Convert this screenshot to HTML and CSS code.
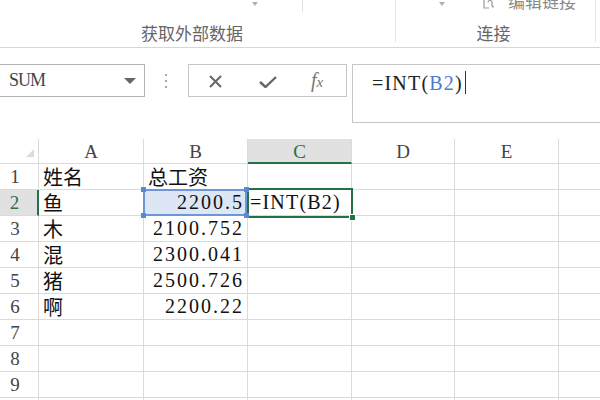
FILE: index.html
```html
<!DOCTYPE html>
<html lang="zh-CN">
<head>
<meta charset="utf-8">
<title>INT</title>
<link rel="stylesheet" href="styles.css">
</head>
<body>
<div class="ribbon">
  <div class="group g1">
    <div class="gtop"><span class="caret"></span><span class="tick"></span></div>
    <div class="glabel">获取外部数据</div>
  </div>
  <div class="group g2">
    <div class="gtop">
      <span class="caret"></span>
      <span class="editlink">
        <svg class="linkicon" width="12" height="12" viewBox="0 0 12 12"><path d="M1 0 V11 H6" fill="none" stroke="#9a9a9a" stroke-width="1.2"/><path d="M5 5.5 a2 2 0 0 1 4 0 v2.5 a2 2 0 0 0 2 2" fill="none" stroke="#9a9a9a" stroke-width="1.2"/></svg>
        <span class="eltext">编辑链接</span>
      </span>
    </div>
    <div class="glabel">连接</div>
  </div>
  <div class="group g3"></div>
</div>

<div class="fbar">
  <div class="namebox"><span>SUM</span><span class="nb-caret"></span></div>
  <div class="dots"><i></i><i></i><i></i></div>
  <div class="fbtns">
    <svg class="ico-x" width="13" height="13" viewBox="0 0 13 13"><path d="M1 1 L12 12 M12 1 L1 12" stroke="#666" stroke-width="2" fill="none"/></svg>
    <svg class="ico-ok" width="18" height="12" viewBox="0 0 18 12"><path d="M1 6 L6.5 11 L17 1" stroke="#666" stroke-width="2.4" fill="none"/></svg>
    <span class="fx">f<span class="fxx">x</span></span>
  </div>
  <div class="finput"><span>=INT(<span class="refc">B2</span>)</span><span class="cursor"></span></div>
</div>

<div class="sheet">
  <div class="corner"><svg width="8" height="8" viewBox="0 0 8 8"><path d="M8 0 V8 H0 Z" fill="#dcdcdc"/></svg></div>
  <div class="ch">A</div>
  <div class="ch">B</div>
  <div class="ch sel">C</div>
  <div class="ch">D</div>
  <div class="ch">E</div>
  <div class="ch"></div>

  <div class="rh">1</div>
  <div class="c"><span class="zh">姓名</span></div>
  <div class="c"><span class="zh">总工资</span></div>
  <div class="c"></div><div class="c"></div><div class="c"></div><div class="c"></div>

  <div class="rh sel">2</div>
  <div class="c"><span class="zh">鱼</span></div>
  <div class="c num refcell">2200.5<span class="refbox"><i class="h tl"></i><i class="h tr"></i><i class="h bl"></i><i class="h br"></i></span></div>
  <div class="c active">=INT(B2)<span class="actbox"><i class="fill"></i></span></div>
  <div class="c"></div><div class="c"></div><div class="c"></div>

  <div class="rh">3</div>
  <div class="c"><span class="zh">木</span></div>
  <div class="c num">2100.752</div>
  <div class="c"></div><div class="c"></div><div class="c"></div><div class="c"></div>

  <div class="rh">4</div>
  <div class="c"><span class="zh">混</span></div>
  <div class="c num">2300.041</div>
  <div class="c"></div><div class="c"></div><div class="c"></div><div class="c"></div>

  <div class="rh">5</div>
  <div class="c"><span class="zh">猪</span></div>
  <div class="c num">2500.726</div>
  <div class="c"></div><div class="c"></div><div class="c"></div><div class="c"></div>

  <div class="rh">6</div>
  <div class="c"><span class="zh">啊</span></div>
  <div class="c num">2200.22</div>
  <div class="c"></div><div class="c"></div><div class="c"></div><div class="c"></div>

  <div class="rh">7</div>
  <div class="c"></div><div class="c"></div><div class="c"></div><div class="c"></div><div class="c"></div><div class="c"></div>

  <div class="rh">8</div>
  <div class="c"></div><div class="c"></div><div class="c"></div><div class="c"></div><div class="c"></div><div class="c"></div>

  <div class="rh">9</div>
  <div class="c"></div><div class="c"></div><div class="c"></div><div class="c"></div><div class="c"></div><div class="c"></div>

  <div class="rh"></div>
  <div class="c"></div><div class="c"></div><div class="c"></div><div class="c"></div><div class="c"></div><div class="c"></div>
</div>
</body>
</html>
```

FILE: styles.css
```css
html, body {
  margin: 0;
  padding: 0;
  background: #fff;
}
body {
  width: 600px;
  height: 400px;
  overflow: hidden;
  font-family: "Liberation Serif", "Noto Sans CJK SC", serif;
  color: #222;
}

/* ribbon */
.ribbon {
  height: 47px;
  border-bottom: 1px solid #d6d6d6;
  display: flex;
  align-items: flex-start;
  overflow: hidden;
}
.group {
  box-sizing: border-box;
  height: 42px;
  border-right: 1px solid #e2e2e2;
  display: flex;
  flex-direction: column;
  justify-content: space-between;
  flex: none;
}
.g1 { width: 396px; padding-right: 11px; }
.g2 { width: 200px; padding-right: 4px; }
.g3 { width: 20px; border-right: none; }
.gtop {
  height: 20px;
  display: flex;
  align-items: flex-start;
}
.g1 .gtop { padding-left: 252px; }
.g2 .gtop { padding-left: 43px; }
.caret {
  width: 0;
  height: 0;
  margin-top: 2px;
  border-left: 3px solid transparent;
  border-right: 3px solid transparent;
  border-top: 4px solid #b0b0b0;
}
.tick {
  width: 1px;
  height: 12px;
  margin-left: 44px;
  background: #e2e2e2;
}
.editlink {
  display: flex;
  align-items: flex-start;
  margin-left: 38px;
  margin-top: -8px;
}
.linkicon { margin-top: 5px; }
.eltext {
  margin-left: 13px;
  font-family: "Noto Sans CJK SC", sans-serif;
  font-size: 17px;
  line-height: 17px;
  color: #8a8a8a;
}
.glabel {
  font-family: "Noto Sans CJK SC", sans-serif;
  font-size: 17px;
  line-height: 18px;
  color: #666;
  text-align: center;
}

/* formula bar */
.fbar {
  box-sizing: border-box;
  height: 91px;
  padding-top: 16px;
  display: flex;
  align-items: flex-start;
}
.namebox {
  box-sizing: border-box;
  flex: none;
  width: 146px;
  height: 33px;
  margin-left: -1px;
  border: 1px solid #b4b4b4;
  padding: 0 8px 0 9px;
  display: flex;
  align-items: center;
  justify-content: space-between;
  font-size: 18px;
  letter-spacing: -1px;
  color: #444;
}
.nb-caret {
  width: 0;
  height: 0;
  border-left: 6px solid transparent;
  border-right: 6px solid transparent;
  border-top: 6px solid #666;
}
.dots {
  flex: none;
  width: 3px;
  height: 33px;
  margin-left: 20px;
  display: flex;
  flex-direction: column;
  justify-content: center;
  gap: 4px;
}
.dots i {
  display: block;
  width: 2px;
  height: 2px;
  background: #a8a8a8;
}
.fbtns {
  box-sizing: border-box;
  flex: none;
  width: 159px;
  height: 33px;
  margin-left: 20px;
  border: 1px solid #c6c6c6;
  display: flex;
  align-items: center;
  padding-left: 20px;
}
.ico-x { margin-top: 1px; }
.ico-ok { margin-left: 37px; margin-top: 2px; }
.fx {
  margin-left: 34px;
  font-family: "Liberation Serif", serif;
  font-style: italic;
  font-size: 20px;
  color: #777;
  line-height: 20px;
}
.fxx { font-size: 15px; }
.finput {
  box-sizing: border-box;
  flex: none;
  width: 252px;
  height: 59px;
  margin-left: 5px;
  border: 1px solid #c6c6c6;
  padding: 5px 0 0 19px;
  font-size: 20px;
  letter-spacing: 1.2px;
  line-height: 26px;
  color: #222;
  display: flex;
  align-items: flex-start;
}
.refc { color: #4e7ad3; }
.cursor {
  width: 1px;
  height: 23px;
  margin-left: 2px;
  margin-top: 1px;
  background: #333;
}

/* sheet */
.sheet {
  display: grid;
  grid-template-columns: 39px 105px 104px 104px 103px 104px 60px;
  grid-template-rows: 25px repeat(10, 26px);
}
.sheet > div {
  box-sizing: border-box;
  border-right: 1px solid #dadada;
  border-bottom: 1px solid #dadada;
  white-space: nowrap;
}
.corner {
  display: flex;
  justify-content: flex-end;
  align-items: flex-end;
  padding: 0 4px 6px 0;
}
.ch {
  text-align: center;
  font-size: 19px;
  line-height: 26px;
  color: #444;
}
.ch.sel {
  background: #e1e1e1;
  color: #217346;
  border-bottom: 2px solid #217346 !important;
  line-height: 25px;
}
.rh {
  text-align: center;
  padding-right: 8px;
  font-size: 19px;
  line-height: 26px;
  color: #444;
}
.rh.sel {
  background: #e1e1e1;
  color: #2f6f4f;
  border-right: 2px solid #217346 !important;
}
.c {
  position: relative;
  padding: 0 4px;
  font-size: 20px;
  letter-spacing: 1.2px;
  line-height: 25px;
  color: #111;
}
.zh {
  font-family: "Noto Sans CJK SC", sans-serif;
  font-size: 20px;
  letter-spacing: 0;
}
.num { text-align: right; padding-right: 3px; letter-spacing: 2px; }
.refcell { background: #dce6f5; }
.refbox {
  position: absolute;
  left: -1px;
  top: -1px;
  right: 0;
  bottom: -1px;
  border: 2px solid #6d95da;
  z-index: 3;
}
.h {
  position: absolute;
  width: 5px;
  height: 5px;
  background: #5b88d6;
}
.h.tl { left: -4px; top: -4px; }
.h.tr { right: -4px; top: -4px; }
.h.bl { left: -4px; bottom: -4px; }
.h.br { right: -4px; bottom: -4px; }
.active { padding-left: 2px; }
.actbox {
  position: absolute;
  left: -1px;
  top: -2px;
  right: -2px;
  bottom: -3px;
  border: 2px solid #217346;
  z-index: 2;
}
.fill {
  position: absolute;
  right: -5px;
  bottom: -5px;
  width: 5px;
  height: 5px;
  background: #217346;
  border: 1px solid #fff;
}
```
